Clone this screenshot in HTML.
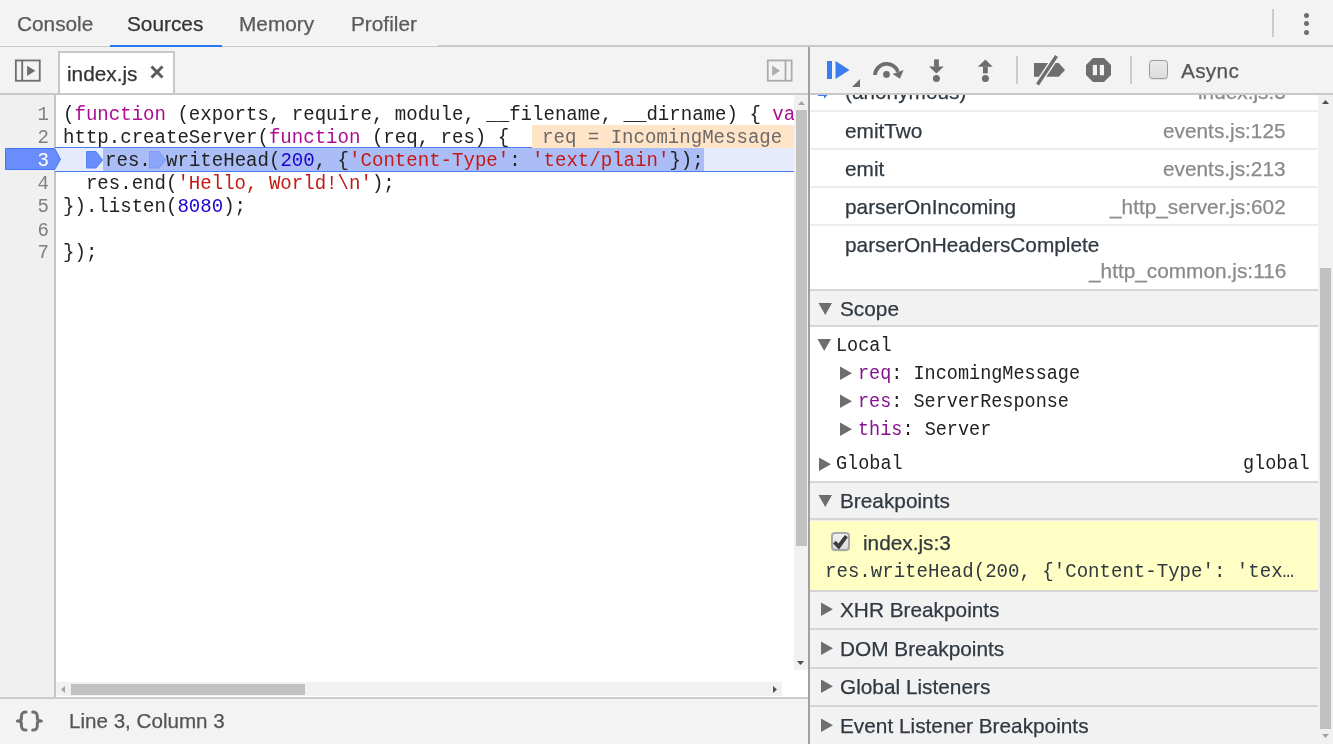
<!DOCTYPE html>
<html><head><meta charset="utf-8">
<style>
*{margin:0;padding:0;box-sizing:border-box}
html,body{width:1333px;height:744px;overflow:hidden;background:#fff;font-family:"Liberation Sans",sans-serif;color:#333}
.a{position:absolute}
.t,.m{will-change:transform}
.t{-webkit-text-stroke:0.25px currentColor}
.t{position:absolute;white-space:pre;font-size:20.8px;line-height:24px}
.m{position:absolute;white-space:pre;font-family:"Liberation Mono",monospace;font-size:19.07px;line-height:21.5px;transform:scaleY(1.07);transform-origin:0 15.8px;margin-top:1px}
.kw{color:#aa0d91}.str{color:#c41a16}.num{color:#1c00cf}
.nm{color:#881391}
</style></head><body>

<!-- ===== top toolbar ===== -->
<div class="a" style="left:0;top:0;width:1333px;height:47px;background:#f3f3f3;border-bottom:1px solid #c6c6c6"></div>
<div class="t" style="left:17px;top:12px;color:#5a5a5a">Console</div>
<div class="t" style="left:127px;top:12px;color:#333">Sources</div>
<div class="a" style="left:0;top:45px;width:438px;height:1px;background:#f8f8f8"></div>
<div class="a" style="left:438px;top:45px;width:895px;height:1px;background:#c9c9c9"></div>
<div class="a" style="left:110px;top:45px;width:112px;height:2px;background:#2a78f2"></div>
<div class="t" style="left:239px;top:12px;color:#5a5a5a">Memory</div>
<div class="t" style="left:351px;top:12px;color:#5a5a5a">Profiler</div>
<div class="a" style="left:1272px;top:9px;width:2px;height:28px;background:#cbcbcb"></div>
<div class="a" style="left:1304px;top:12.5px;width:5px;height:5px;border-radius:50%;background:#6e6e6e"></div>
<div class="a" style="left:1304px;top:21px;width:5px;height:5px;border-radius:50%;background:#6e6e6e"></div>
<div class="a" style="left:1304px;top:30px;width:5px;height:5px;border-radius:50%;background:#6e6e6e"></div>

<!-- ===== left panel ===== -->
<div class="a" style="left:0;top:47px;width:808px;height:48px;background:#f3f3f3;border-bottom:2px solid #c8c8c8"></div>
<!-- sidebar toggle icon -->
<svg class="a" style="left:14px;top:59px" width="28" height="24" viewBox="0 0 28 24">
 <rect x="1.85" y="1.45" width="23.9" height="20.3" fill="none" stroke="#6e6e6e" stroke-width="1.8"/>
 <rect x="7.3" y="1.45" width="1.8" height="20.3" fill="#6e6e6e"/>
 <path d="M13.1 6.7 L21.3 11.85 L13.1 17 Z" fill="#6e6e6e"/>
</svg>
<!-- file tab -->
<div class="a" style="left:58px;top:51px;width:117px;height:42px;background:#fff;border:2px solid #c8c8c8;border-bottom:none"></div>
<div class="t" style="left:67px;top:62px;color:#333">index.js</div>
<svg class="a" style="left:150px;top:65px" width="14" height="14" viewBox="0 0 14 14">
 <path d="M1.5 1.5 L12.5 12.5 M12.5 1.5 L1.5 12.5" stroke="#5a5a5a" stroke-width="2.9"/>
</svg>
<!-- right toggle icon -->
<svg class="a" style="left:766px;top:59px" width="28" height="24" viewBox="0 0 28 24">
 <rect x="1.75" y="1.45" width="23.9" height="20.3" fill="none" stroke="#ababab" stroke-width="1.8"/>
 <rect x="18.6" y="1.45" width="1.8" height="20.3" fill="#ababab"/>
 <path d="M6.2 6.4 L14.1 11.65 L6.2 16.9 Z" fill="#ababab"/>
</svg>

<!-- code area -->
<div class="a" style="left:0;top:95px;width:808px;height:603px;background:#fff"></div>
<div class="a" style="left:0;top:95px;width:56px;height:603px;background:#f0f0f0;border-right:2px solid #c4c4c4"></div>

<!-- exec line -->
<div class="a" style="left:55px;top:147px;width:739px;height:25px;background:#e5eafd;border-top:1px solid #4a7ef0;border-bottom:1px solid #4a7ef0"></div>
<div class="a" style="left:103px;top:148px;width:601px;height:23px;background:#abbdf7"></div>
<!-- breakpoint gutter marker -->
<svg class="a" style="left:5px;top:148px" width="57" height="23" viewBox="0 0 57 23">
 <path d="M0.5 0.5 H49.7 L55.5 11.25 L49.7 21.5 H0.5 Z" fill="#6a8dfc" stroke="#4277f4" stroke-width="1"/>
</svg>
<!-- inline markers -->
<svg class="a" style="left:86px;top:151px" width="18" height="18" viewBox="0 0 18 18">
 <path d="M0.5 0.5 H10 L16.6 9 L10 17 H0.5 Z" fill="#6a8dfc" stroke="#5582f6" stroke-width="1"/>
</svg>
<svg class="a" style="left:149px;top:151px" width="18" height="18" viewBox="0 0 18 18">
 <path d="M0.5 0.5 H10 L16.6 9 L10 17 H0.5 Z" fill="#8aa5fa" stroke="#7e9cf9" stroke-width="1"/>
</svg>
<!-- inline value -->
<div class="a" style="left:532px;top:125px;width:262px;height:23px;background:#ffe4c8"></div>

<!-- line numbers -->
<div class="m" style="left:0;top:104px;width:49px;text-align:right;color:#808080">1
2
<span style="color:#fff">3</span>
4
5
6
7</div>
<div class="m" style="left:63px;top:104px;color:#222">(<span class="kw">function</span> (exports, require, module, __filename, __dirname) { <span class="kw">va</span>
http.createServer(<span class="kw">function</span> (req, res) {</div>
<div class="m" style="left:542px;top:127px;color:#6b6b6b">req = IncomingMessage</div>
<div class="m" style="left:105px;top:150px;color:#222">res.</div>
<div class="m" style="left:166px;top:150px;color:#222">writeHead(<span class="num">200</span>, {<span class="str">'Content-Type'</span>: <span class="str">'text/plain'</span>});</div>
<div class="m" style="left:63px;top:173px;color:#222">  res.end(<span class="str">'Hello, World!\n'</span>);
}).listen(<span class="num">8080</span>);

});</div>

<!-- vertical scrollbar -->
<div class="a" style="left:794px;top:95px;width:14px;height:575px;background:#f1f1f1"></div>
<div class="a" style="left:796px;top:110px;width:11px;height:436px;background:#c1c1c1"></div>
<svg class="a" style="left:794px;top:95px" width="14" height="13"><path d="M4 10 L7.5 6 L11 10 Z" fill="#a3a3a3"/></svg>
<svg class="a" style="left:794px;top:657px" width="13" height="13"><path d="M3 4 L6.5 8 L10 4 Z" fill="#505050"/></svg>
<!-- horizontal scrollbar -->
<div class="a" style="left:56px;top:682px;width:726px;height:14px;background:#f1f1f1"></div>
<div class="a" style="left:71px;top:684px;width:234px;height:10.5px;background:#c1c1c1"></div>
<svg class="a" style="left:56px;top:682px" width="14" height="15"><path d="M9 4 L5 7.5 L9 11 Z" fill="#a3a3a3"/></svg>
<svg class="a" style="left:768px;top:682px" width="14" height="15"><path d="M5 4 L9 7.5 L5 11 Z" fill="#505050"/></svg>

<!-- status bar -->
<div class="a" style="left:0;top:697px;width:808px;height:47px;background:#f3f3f3;border-top:2px solid #cdcdcd"></div>
<svg class="a" style="left:14px;top:709px" width="31" height="24" viewBox="0 0 31 24"><path d="M12 3 C8.8 3 7.6 4 7.4 7.2 L7.4 9.6 C7.4 11 6.4 12 3.4 12 C6.4 12 7.4 13 7.4 14.4 L7.4 16.8 C7.6 20 8.8 21 12 21 M18.7 3 C21.9 3 23.1 4 23.3 7.2 L23.3 9.6 C23.3 11 24.3 12 27.3 12 C24.3 12 23.3 13 23.3 14.4 L23.3 16.8 C23.1 20 21.9 21 18.7 21" fill="none" stroke="#6e6e6e" stroke-width="3" stroke-linecap="round" stroke-linejoin="round"/></svg>
<div class="t" style="left:69px;top:709px;color:#555;font-size:20.6px">Line 3, Column 3</div>

<!-- ===== split ===== -->
<div class="a" style="left:808px;top:47px;width:2px;height:697px;background:#a0a0a0"></div>

<!-- ===== right panel ===== -->
<div class="a" style="left:810px;top:47px;width:523px;height:48px;background:#f3f3f3;border-bottom:2px solid #c8c8c8"></div>

<!-- debug toolbar icons -->
<svg class="a" style="left:820px;top:52px" width="50" height="40" viewBox="820 52 50 40">
 <rect x="827" y="61" width="5" height="18" fill="#3b7cf0"/>
 <path d="M835.5 61 L849.5 70 L835.5 79 Z" fill="#3b7cf0"/>
 <path d="M852 87 L860 87 L860 79 Z" fill="#6e6e6e"/>
</svg>
<svg class="a" style="left:868px;top:52px" width="40" height="40" viewBox="868 52 40 40">
 <path d="M874.97 74.98 A11.8 11.8 0 0 1 897.97 71.95" fill="none" stroke="#6e6e6e" stroke-width="3.8"/>
 <path d="M892.6 73.9 L903.6 70.0 L899.9 78.8 Z" fill="#6e6e6e"/>
 <circle cx="886.5" cy="74.4" r="3.4" fill="#6e6e6e"/>
</svg>
<svg class="a" style="left:924px;top:52px" width="26" height="40" viewBox="924 52 26 40">
 <rect x="934.1" y="59.4" width="4.8" height="7.4" fill="#6e6e6e"/>
 <path d="M929 66.6 L943.8 66.6 L936.4 73.4 Z" fill="#6e6e6e"/>
 <circle cx="936.4" cy="78.6" r="3.5" fill="#6e6e6e"/>
</svg>
<svg class="a" style="left:972px;top:52px" width="26" height="40" viewBox="972 52 26 40">
 <path d="M977.9 66.8 L992.7 66.8 L985.4 59.4 Z" fill="#6e6e6e"/>
 <rect x="983" y="66.5" width="4.8" height="6.9" fill="#6e6e6e"/>
 <circle cx="985.4" cy="78.6" r="3.5" fill="#6e6e6e"/>
</svg>
<div class="a" style="left:1016px;top:56px;width:2px;height:28px;background:#cbcbcb"></div>
<svg class="a" style="left:1030px;top:52px" width="40" height="36" viewBox="1030 52 40 36">
 <path d="M1034 63 L1058.8 63 L1065 70 L1058.8 76.8 L1034 76.8 Z" fill="#6e6e6e"/>
 <path d="M1037.5 84.5 L1056.5 56" stroke="#f3f3f3" stroke-width="6.2"/>
 <path d="M1037.5 84.5 L1056.5 56" stroke="#6e6e6e" stroke-width="3.4"/>
</svg>
<svg class="a" style="left:1084px;top:55px" width="30" height="30" viewBox="1084 55 30 30">
 <path d="M1093 58 L1104 58 L1111 65 L1111 75 L1104 82 L1093 82 L1086 75 L1086 65 Z" fill="#6e6e6e"/>
 <rect x="1092.8" y="64.9" width="4.2" height="10.3" fill="#f3f3f3"/>
 <rect x="1099.8" y="64.9" width="4.2" height="10.3" fill="#f3f3f3"/>
</svg>
<div class="a" style="left:1130px;top:56px;width:2px;height:28px;background:#cbcbcb"></div>
<div class="a" style="left:1149px;top:60px;width:19px;height:19px;border-radius:3.5px;border:1.5px solid #9a9a9a;background:linear-gradient(#eaeaea,#dcdcdc);box-shadow:0 1px 1px rgba(0,0,0,0.08)"></div>
<div class="t" style="left:1181px;top:59px;color:#555;letter-spacing:0.3px">Async</div>

<!-- sidebar content -->
<div class="a" style="left:810px;top:95px;width:523px;height:649px;overflow:hidden;background:#fff">
 <div class="a" style="left:0;top:0;width:508px;height:649px">
  <!-- call stack rows (coords relative: y-95) -->
  <svg class="a" style="left:0;top:-15px" width="30" height="20" viewBox="810 80 30 20"><path d="M818 93 L824 93 L824 85.4 L830.7 92 L824 98.7 L824 96 L818 96 Z" fill="#3b7cf0"/></svg>
  <div class="t" style="left:35px;top:-15px;color:#303942">(anonymous)</div>
  <div class="t" style="right:32px;top:-15px;color:#8a8a8a">index.js:3</div>
  <div class="a" style="left:0;top:15px;width:508px;height:2px;background:#ededed"></div>
  <div class="t" style="left:35px;top:24px;color:#303942">emitTwo</div>
  <div class="t" style="right:32px;top:24px;color:#8a8a8a">events.js:125</div>
  <div class="a" style="left:0;top:53px;width:508px;height:2px;background:#ededed"></div>
  <div class="t" style="left:35px;top:62px;color:#303942">emit</div>
  <div class="t" style="right:32px;top:62px;color:#8a8a8a">events.js:213</div>
  <div class="a" style="left:0;top:91px;width:508px;height:2px;background:#ededed"></div>
  <div class="t" style="left:35px;top:100px;color:#303942">parserOnIncoming</div>
  <div class="t" style="right:32px;top:100px;color:#8a8a8a">_http_server.js:602</div>
  <div class="a" style="left:0;top:129px;width:508px;height:2px;background:#ededed"></div>
  <div class="t" style="left:35px;top:138px;color:#303942">parserOnHeadersComplete</div>
  <div class="t" style="right:32px;top:164px;color:#8a8a8a">_http_common.js:116</div>

  <!-- Scope header -->
  <div class="a" style="left:0;top:194px;width:508px;height:38px;background:#f2f2f2;border-top:2px solid #d6d6d6;border-bottom:2px solid #d6d6d6"></div>
  <svg class="a" style="left:8px;top:208px" width="15" height="13" viewBox="0 0 15 13"><path d="M0.5 0 L14 0 L7.25 12 Z" fill="#6e6e6e"/></svg>
  <div class="t" style="left:30px;top:202px;color:#303942">Scope</div>
  <!-- Local -->
  <svg class="a" style="left:7px;top:244px" width="15" height="13" viewBox="0 0 15 13"><path d="M0.5 0 L14 0 L7.25 12 Z" fill="#6e6e6e"/></svg>
  <div class="m" style="left:26px;top:240px;font-size:18.5px;color:#222">Local</div>
  <svg class="a" style="left:30px;top:271px" width="13" height="15" viewBox="0 0 13 15"><path d="M0 0.5 L12 7.25 L0 14 Z" fill="#6e6e6e"/></svg>
  <div class="m" style="left:48px;top:268px;font-size:18.5px;color:#222"><span class="nm">req</span>: IncomingMessage</div>
  <svg class="a" style="left:30px;top:299px" width="13" height="15" viewBox="0 0 13 15"><path d="M0 0.5 L12 7.25 L0 14 Z" fill="#6e6e6e"/></svg>
  <div class="m" style="left:48px;top:296px;font-size:18.5px;color:#222"><span class="nm">res</span>: ServerResponse</div>
  <svg class="a" style="left:30px;top:327px" width="13" height="15" viewBox="0 0 13 15"><path d="M0 0.5 L12 7.25 L0 14 Z" fill="#6e6e6e"/></svg>
  <div class="m" style="left:48px;top:324px;font-size:18.5px;color:#222"><span class="nm">this</span>: Server</div>
  <svg class="a" style="left:9px;top:362px" width="13" height="15" viewBox="0 0 13 15"><path d="M0 0.5 L12 7.25 L0 14 Z" fill="#6e6e6e"/></svg>
  <div class="m" style="left:26px;top:358px;font-size:18.5px;color:#222">Global</div>
  <div class="m" style="right:8px;top:358px;font-size:18.5px;color:#222">global</div>

  <!-- Breakpoints header -->
  <div class="a" style="left:0;top:386px;width:508px;height:39px;background:#f2f2f2;border-top:2px solid #d6d6d6;border-bottom:2px solid #d6d6d6"></div>
  <div class="a" style="left:0;top:425px;width:508px;height:1px;background:#efefef"></div>
  <svg class="a" style="left:8px;top:400px" width="15" height="13" viewBox="0 0 15 13"><path d="M0.5 0 L14 0 L7.25 12 Z" fill="#6e6e6e"/></svg>
  <div class="t" style="left:30px;top:394px;color:#303942">Breakpoints</div>
  <div class="a" style="left:0;top:426px;width:508px;height:69px;background:#ffffc5"></div>
  <div class="a" style="left:21px;top:437px;width:19px;height:19px;border-radius:4px;border:2px solid #a9a9a9;background:linear-gradient(#f2f2f2,#dadada);box-shadow:0 1px 1px rgba(0,0,0,0.06)"></div>
  <svg class="a" style="left:0;top:430px" width="60" height="30" viewBox="810 525 60 30"><path d="M834.4 542.2 L838.7 546.5 L846.4 536.2" fill="none" stroke="#3d3d3d" stroke-width="3.8" stroke-linejoin="miter" stroke-miterlimit="2"/></svg>
  <div class="t" style="left:53px;top:436px;color:#303942">index.js:3</div>
  <div class="m" style="left:15px;top:466px;color:#303942">res.writeHead(200, {'Content-Type': 'tex…</div>

  <!-- collapsed sections -->
  <div class="a" style="left:0;top:495px;width:508px;height:154px;background:#f2f2f2"></div>
  <div class="a" style="left:0;top:495px;width:508px;height:2px;background:#d6d6d6"></div>
  <svg class="a" style="left:11px;top:507px" width="13" height="15" viewBox="0 0 13 15"><path d="M0 0.5 L12 7.25 L0 14 Z" fill="#6e6e6e"/></svg>
  <div class="t" style="left:30px;top:503px;color:#303942">XHR Breakpoints</div>
  <div class="a" style="left:0;top:533px;width:508px;height:2px;background:#d6d6d6"></div>
  <svg class="a" style="left:11px;top:546px" width="13" height="15" viewBox="0 0 13 15"><path d="M0 0.5 L12 7.25 L0 14 Z" fill="#6e6e6e"/></svg>
  <div class="t" style="left:30px;top:542px;color:#303942">DOM Breakpoints</div>
  <div class="a" style="left:0;top:572px;width:508px;height:2px;background:#d6d6d6"></div>
  <svg class="a" style="left:11px;top:584px" width="13" height="15" viewBox="0 0 13 15"><path d="M0 0.5 L12 7.25 L0 14 Z" fill="#6e6e6e"/></svg>
  <div class="t" style="left:30px;top:580px;color:#303942">Global Listeners</div>
  <div class="a" style="left:0;top:610px;width:508px;height:2px;background:#d6d6d6"></div>
  <svg class="a" style="left:11px;top:623px" width="13" height="15" viewBox="0 0 13 15"><path d="M0 0.5 L12 7.25 L0 14 Z" fill="#6e6e6e"/></svg>
  <div class="t" style="left:30px;top:619px;color:#303942">Event Listener Breakpoints</div>
 </div>
 <!-- scrollbar -->
 <div class="a" style="left:508px;top:0;width:15px;height:649px;background:#f1f1f1"></div>
 <div class="a" style="left:510px;top:173px;width:11px;height:461px;background:#c1c1c1"></div>
 <svg class="a" style="left:508px;top:0" width="15" height="14"><path d="M4 9 L7.5 5 L11 9 Z" fill="#505050"/></svg>
 <svg class="a" style="left:508px;top:634px" width="15" height="14"><path d="M4 5 L7.5 9 L11 5 Z" fill="#a3a3a3"/></svg>
</div>

</body></html>
